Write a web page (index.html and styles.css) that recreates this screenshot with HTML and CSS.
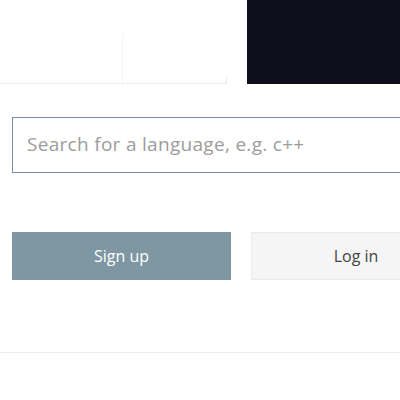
FILE: index.html
```html
<!DOCTYPE html>
<html lang="en">
<head>
<meta charset="utf-8">
<link rel="stylesheet" href="styles.css">
</head>
<body>
<div class="page">
  <header class="top">
    <div class="top-left">
      <div class="cell"></div>
      <div class="cell cell-right"></div>
    </div>
    <div class="dark-panel"></div>
  </header>
  <div class="search-row">
    <div class="search-box"><span class="placeholder">Search for a language, e.g. c++</span></div>
  </div>
  <div class="actions">
    <div class="btn btn-primary">Sign up</div>
    <div class="btn btn-secondary">Log in</div>
  </div>
  <div class="footer-rule"></div>
</div>
</body>
</html>
```
FILE: styles.css
```css
html, body {
  margin: 0;
  padding: 0;
  background: #ffffff;
  overflow: hidden;
}
.page {
  width: 400px;
  height: 400px;
  font-family: "Open Sans", Lato, sans-serif;
  overflow: hidden;
}
.top {
  display: flex;
  height: 84px;
}
.top-left {
  width: 227px;
  height: 84px;
  display: flex;
  align-items: flex-end;
  border-bottom: 1px solid #ececec;
  box-sizing: border-box;
  margin-right: 20px;
}
.cell {
  width: 123px;
  height: 49px;
  border-right: 1px solid #f3f3f3;
  box-sizing: border-box;
}
.cell-right {
  flex: 1;
  border-right: 1px solid #e8e8e8;
  height: 6px;
}
.dark-panel {
  flex: 1;
  background: #0e0e1c;
}
.search-row {
  padding: 33px 0 0 12px;
}
.search-box {
  width: 420px;
  height: 56px;
  box-sizing: border-box;
  border: 1px solid #7c89a5;
  display: flex;
  align-items: center;
  padding-left: 14px;
  padding-bottom: 3px;
}
.placeholder {
  font-size: 19px;
  letter-spacing: 0.3px;
  color: #9c9c9c;
  white-space: nowrap;
}
.actions {
  display: flex;
  gap: 20px;
  padding: 59px 0 0 12px;
}
.btn {
  height: 48px;
  display: flex;
  align-items: center;
  justify-content: center;
  font-size: 16px;
  box-sizing: border-box;
  flex-shrink: 0;
}
.btn-primary {
  width: 219px;
  background: #7f97a2;
  color: #ffffff;
}
.btn-secondary {
  width: 210px;
  background: #f5f5f5;
  border: 1px solid #ebebeb;
  color: #444444;
}
.footer-rule {
  margin-top: 72px;
  height: 1px;
  background: #eeeeee;
}
```
